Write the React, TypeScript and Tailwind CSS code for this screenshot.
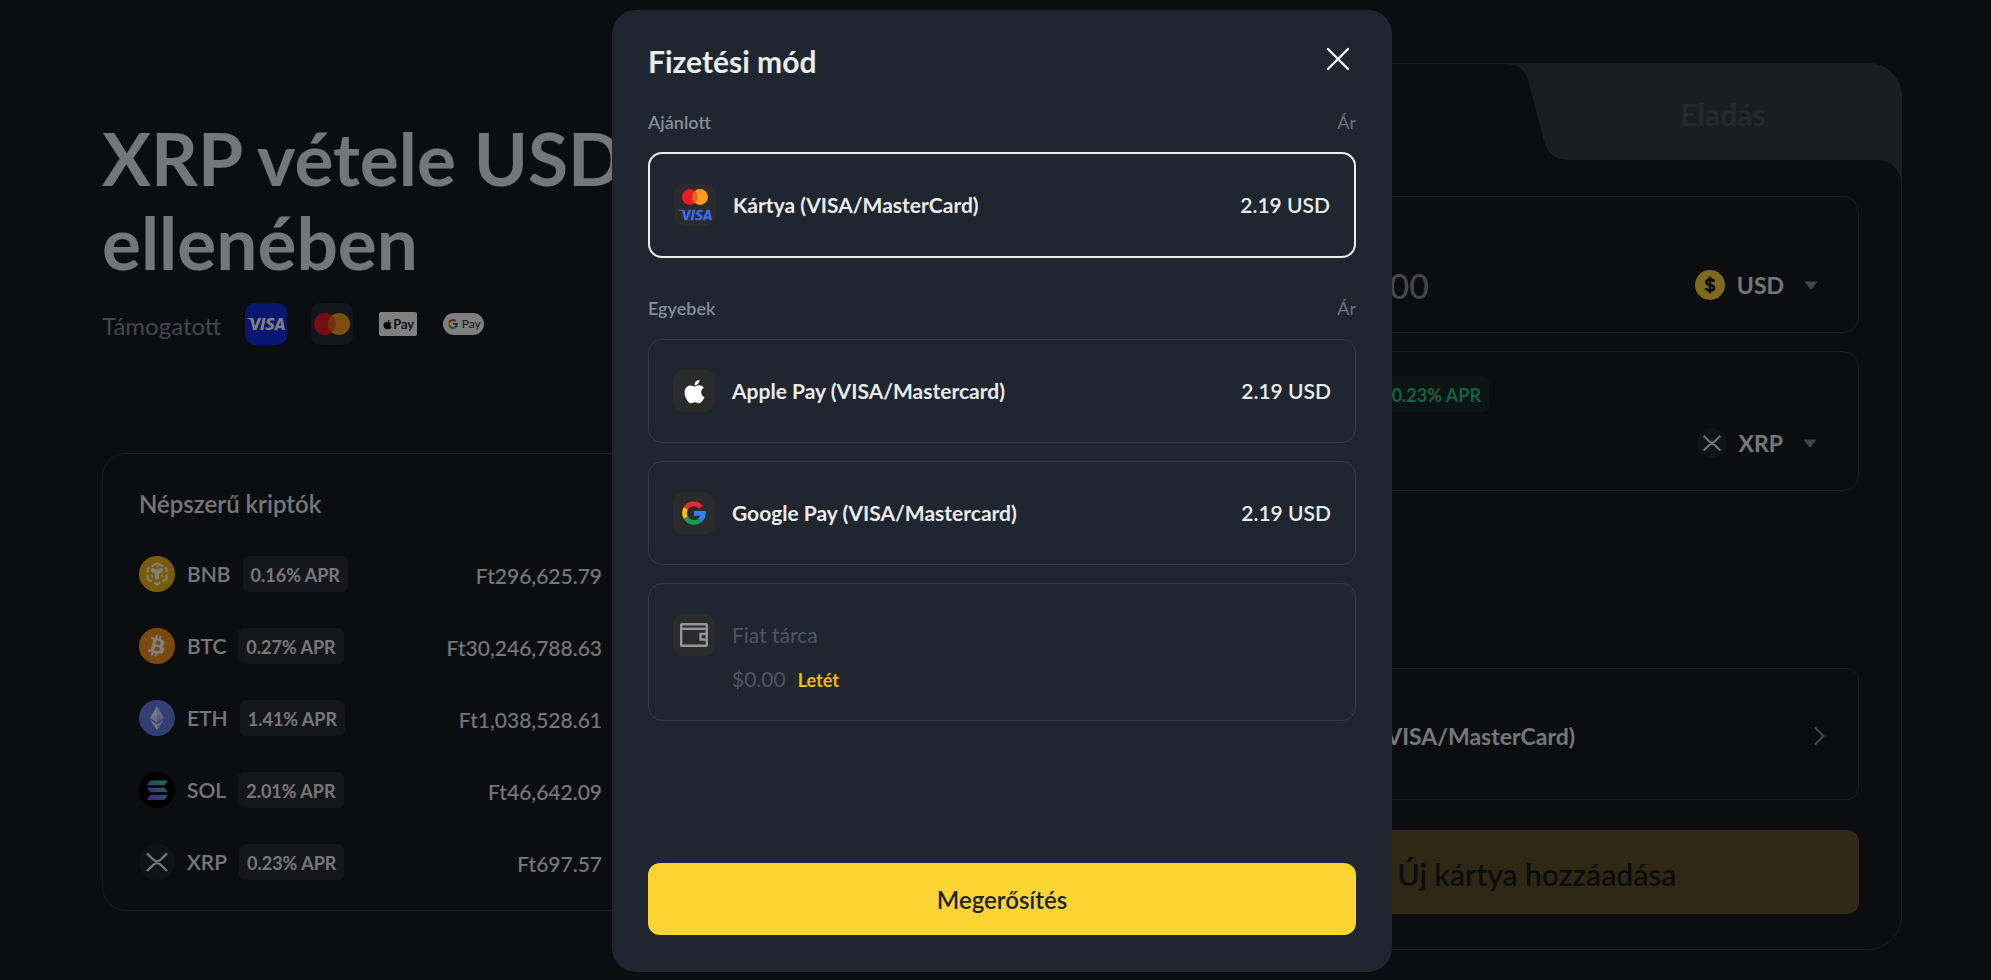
import type { ReactNode } from "react";
import { FaApple, FaBitcoin } from "react-icons/fa";
import { FcGoogle } from "react-icons/fc";
import { SiVisa } from "react-icons/si";

function MastercardMark({ className }: { className: string }) {
  return (
    <svg viewBox="0 0 36 22" className={className} aria-hidden="true">
      <circle cx="11" cy="11" r="11" fill="#eb1c26" />
      <circle cx="25" cy="11" r="11" fill="#f79e1b" />
      <path d="M18 2.5a11 11 0 0 1 0 17a11 11 0 0 1 0-17z" fill="#f16022" />
    </svg>
  );
}

function BnbIcon() {
  return (
    <svg viewBox="0 0 36 36" className="size-9" aria-hidden="true">
      <circle cx="18" cy="18" r="18" fill="#f0b90b" />
      <g fill="none" stroke="#fff" strokeWidth="2.2">
        <path d="M12.6 10.4L18 7.2l5.4 3.2" />
        <path d="M8.6 16.2v-3.5l2-1.2M27.4 16.2v-3.5l-2-1.2" />
        <path d="M8.6 18.6v4.6l4 2.4M27.4 18.6v4.6l-4 2.4" />
        <path d="M15 26.6l3 1.8l3-1.8" />
      </g>
      <path d="M12 13l2.2-1.2L18 14l3.8-2.2L24 13v2.6l-4 2.4v4.6l-2 1.2l-2-1.2V18l-4-2.4z" fill="#fff" />
      <path d="M12 18.2l2 1.2v2.4l-2-1.2zM24 18.2l-2 1.2v2.4l2-1.2zM16.6 10.6l1.4-.8l1.4.8l-1.4.8z" fill="#fff" />
    </svg>
  );
}

function BtcIcon() {
  return (
    <span className="flex size-9 items-center justify-center rounded-full bg-[radial-gradient(circle,#fff_60%,#f7931a_62%)]">
      <FaBitcoin className="size-9 text-[#f7931a]" aria-hidden="true" />
    </span>
  );
}

function EthIcon() {
  return (
    <svg viewBox="0 0 36 36" className="size-9" aria-hidden="true">
      <circle cx="18" cy="18" r="18" fill="#627eea" />
      <path d="M18 6l-7.1 12.2L18 15z" fill="#fff" fillOpacity=".9" />
      <path d="M18 6l7.1 12.2L18 15z" fill="#fff" fillOpacity=".7" />
      <path d="M18 15l-7.1 3.2L18 22.5z" fill="#fff" fillOpacity=".75" />
      <path d="M18 15l7.1 3.2L18 22.5z" fill="#fff" fillOpacity=".45" />
      <path d="M10.9 19.8L18 30v-5.8z" fill="#fff" fillOpacity=".9" />
      <path d="M25.1 19.8L18 30v-5.8z" fill="#fff" fillOpacity=".65" />
    </svg>
  );
}

function SolIcon() {
  return (
    <svg viewBox="0 0 36 36" className="size-9" aria-hidden="true">
      <defs>
        <linearGradient id="sol" x1="8" y1="28" x2="28" y2="8" gradientUnits="userSpaceOnUse">
          <stop offset="0" stopColor="#9b3dff" />
          <stop offset=".45" stopColor="#6a7fd6" />
          <stop offset="1" stopColor="#19fb9b" />
        </linearGradient>
      </defs>
      <circle cx="18" cy="18" r="18" fill="#000" />
      <path d="M11.4 8.4H29l-3.6 4.8H7.6z" fill="url(#sol)" />
      <path d="M7.6 15.8h17.8l3.6 4.4H11.4z" fill="url(#sol)" />
      <path d="M11.4 22.8H29l-3.6 5.2H7.6z" fill="url(#sol)" />
    </svg>
  );
}

function XrpIcon({ className }: { className: string }) {
  return (
    <svg viewBox="0 0 36 36" className={className} aria-hidden="true">
      <circle cx="18" cy="18" r="18" fill="#23262b" />
      <g fill="none" stroke="#eaecef" strokeWidth="2.4">
        <path d="M8 9.4l6.2 6.1a5.4 5.4 0 0 0 7.6 0L28 9.4" />
        <path d="M8 27l6.2-6.1a5.4 5.4 0 0 1 7.6 0L28 27" />
      </g>
    </svg>
  );
}

function DollarIcon() {
  return (
    <svg viewBox="0 0 30 30" className="size-[30px]" aria-hidden="true">
      <circle cx="15" cy="15" r="15" fill="#fcd535" />
      <g fill="none" stroke="#181a20" strokeWidth="2.8">
        <path d="M19 11.8c-.4-1.5-1.7-2.1-4-2.1c-2.3 0-3.6.8-3.6 2.5c0 3.8 7.6 1.6 7.6 5.5c0 1.8-1.5 2.6-4 2.6c-2.5 0-3.8-.7-4.2-2.3" />
        <path d="M15 6.6v16.8" strokeWidth="2.6" />
      </g>
    </svg>
  );
}

function Caret() {
  return (
    <svg viewBox="0 0 14 9" className="h-[9px] w-[14px]" aria-hidden="true">
      <path d="M1.6.5h10.8q1 0 .4.9L8 7.8q-1 1-2 0L1.2 1.4q-.6-.9.4-.9z" fill="#848a94" />
    </svg>
  );
}

function WalletIcon() {
  return (
    <svg viewBox="0 0 28 24" className="h-6 w-7" fill="none" stroke="#93969c" strokeWidth="2.4" aria-hidden="true">
      <rect x="1.2" y="1.2" width="25.6" height="21.6" rx=".6" />
      <path d="M1 5.8h26" />
      <path d="M27 11h-6.5v5.5H27" />
    </svg>
  );
}

function Tile({ children }: { children: ReactNode }) {
  return (
    <span className="flex size-[42px] shrink-0 flex-col items-center justify-center rounded-[10px] bg-[#2b2b2b]">
      {children}
    </span>
  );
}

const coins = [
  { name: "BNB", apr: "0.16% APR", price: "Ft296,625.79", icon: <BnbIcon /> },
  { name: "BTC", apr: "0.27% APR", price: "Ft30,246,788.63", icon: <BtcIcon /> },
  { name: "ETH", apr: "1.41% APR", price: "Ft1,038,528.61", icon: <EthIcon /> },
  { name: "SOL", apr: "2.01% APR", price: "Ft46,642.09", icon: <SolIcon /> },
  { name: "XRP", apr: "0.23% APR", price: "Ft697.57", icon: <XrpIcon className="size-9" /> },
];

function PopularCoins() {
  return (
    <section className="mt-[108px] rounded-3xl border border-[#34383e] px-9 pt-[34px] pb-3">
      <h2 className="text-2xl leading-8 font-semibold">Népszerű kriptók</h2>
      <table className="mt-[18px] w-[463px]">
        <tbody>
          {coins.map((coin) => (
            <tr key={coin.name} className="h-[72px]">
              <td>
                <div className="flex items-center">
                  {coin.icon}
                  <span className="ml-3 text-[21px] leading-6 font-semibold">{coin.name}</span>
                  <span className="ml-3 rounded-md bg-[#292d37] px-2 pt-0.5 text-lg leading-[34px] font-bold">{coin.apr}</span>
                </div>
              </td>
              <td className="pt-1 text-right text-[21px] font-medium">{coin.price}</td>
            </tr>
          ))}
        </tbody>
      </table>
    </section>
  );
}

function Intro() {
  return (
    <div className="min-w-0 flex-1 pt-[53px]">
      <h1 className="max-w-[700px] text-[73px] leading-[84px] font-bold">XRP vétele USD ellenében</h1>
      <div className="mt-[19px] flex h-[42px] items-center gap-6">
        <span className="pt-1 text-2xl text-[#848e9c]">Támogatott</span>
        <span className="flex size-[42px] items-center justify-center rounded-[10px] bg-[#142ee0]">
          <SiVisa className="size-[38px] text-white" aria-label="Visa" />
        </span>
        <span className="flex size-[42px] items-center justify-center rounded-[10px] bg-[#292d37]">
          <MastercardMark className="h-[22px] w-9" />
        </span>
        <span className="flex w-[42px] justify-center">
          <span className="flex h-6 w-[38px] items-center justify-center rounded-xs bg-white text-black">
            <FaApple className="size-[11px]" aria-hidden="true" />
            <span className="text-[13px] leading-4 font-semibold">Pay</span>
          </span>
        </span>
        <span className="flex h-[22px] w-[41px] items-center justify-center gap-[3px] rounded-full bg-white text-[#3c4043]">
          <FcGoogle className="size-3" aria-hidden="true" />
          <span className="text-xs leading-3 font-medium">Pay</span>
        </span>
      </div>
      <PopularCoins />
    </div>
  );
}

function CurrencyButton({ icon, name }: { icon: ReactNode; name: string }) {
  return (
    <button type="button" className="flex items-center text-[23px] leading-[30px] font-bold">
      {icon}
      <span className="mr-5 ml-3">{name}</span>
      <Caret />
    </button>
  );
}

function TradeCard() {
  return (
    <section className="w-[730px] shrink-0 rounded-[34px] border border-[#34383e] pb-[35px]">
      <div className="flex h-24">
        <div className="flex-1" />
        <button type="button" className="relative flex flex-1 items-center justify-center text-[30px] font-bold text-[#4c505e]">
          <svg viewBox="0 0 397 120" className="absolute -top-px -right-px h-[120px] w-[397px]" aria-hidden="true">
            <path
              d="M0 0H363A34 34 0 0 1 397 34V120H396C395 105 386 97 371 97H64C51 97 42 90 39 78L24 20C21 7 13 1 0 1z"
              fill="#363a49"
            />
          </svg>
          <span className="relative pt-1 pl-2">Eladás</span>
        </button>
      </div>
      <div className="px-[42px] pt-9">
        <div className="flex h-[137px] items-end justify-between rounded-2xl border border-[#34383e] pr-10 pb-8">
          <input
            aria-label="Összeg"
            defaultValue="0.00"
            className="h-8 w-[213px] bg-transparent pt-0.5 text-right text-[34px] leading-8 font-medium text-[#848e9c] outline-none"
          />
          <CurrencyButton icon={<DollarIcon />} name="USD" />
        </div>
        <div className="mt-[18px] flex h-[140px] flex-col justify-between rounded-2xl border border-[#34383e] pt-6 pr-[41px] pb-8">
          <div className="flex w-[273px] justify-end">
            <span className="rounded-md bg-[#182a26] px-2 pt-0.5 text-lg leading-[34px] font-bold text-[#2ebd85]">0.23% APR</span>
          </div>
          <div className="flex justify-end">
            <CurrencyButton icon={<XrpIcon className="size-[30px]" />} name="XRP" />
          </div>
        </div>
        <button
          type="button"
          className="mt-[177px] flex h-[132px] w-full items-center rounded-xl border border-[#34383e] pr-8 pl-6 text-[23px] font-bold"
        >
          <Tile>
            <MastercardMark className="h-4 w-[26px]" />
          </Tile>
          <span className="ml-6 flex-1 pt-1 text-left">Kártya (VISA/MasterCard)</span>
          <svg viewBox="0 0 12 20" className="mt-1 mr-px h-5 w-3" fill="none" stroke="#848e9c" strokeWidth="2" aria-hidden="true">
            <path d="M2 1.5l8.500 8.500L2 18.500" />
          </svg>
        </button>
        <button
          type="button"
          className="mt-[30px] h-[84px] w-full rounded-xl bg-[#5c5028] pt-1 text-[30px] font-semibold text-[#181a20]"
        >
          Új kártya hozzáadása
        </button>
      </div>
    </section>
  );
}

function SectionLabel({ children }: { children: ReactNode }) {
  return (
    <div className="flex justify-between text-lg leading-6">
      <h3 className="font-semibold text-[#848e9c]">{children}</h3>
      <span className="text-[#6a7280]">Ár</span>
    </div>
  );
}

function Option({ icon, name, checked }: { icon: ReactNode; name: string; checked?: boolean }) {
  return (
    <label className="flex cursor-pointer items-center rounded-[14px] border border-[#333b47] px-6 py-[30px] text-[21px] leading-6 has-checked:border-2 has-checked:border-[#eaecef]">
      <input type="radio" name="method" defaultChecked={checked} className="sr-only" />
      {icon}
      <span className="ml-[17px] flex-1 font-bold">{name}</span>
      <span className="font-semibold">2.19 USD</span>
    </label>
  );
}

function PaymentDialog() {
  return (
    <div className="fixed inset-0 flex justify-center bg-black/50 pt-2.5 pb-2 pl-[13px]">
      <div
        role="dialog"
        aria-labelledby="dialog-title"
        className="flex w-[780px] flex-col rounded-3xl bg-[#1f262f] px-9 pt-[30px] pb-[37px]"
      >
        <header className="flex h-[42px] items-start justify-between">
          <h2 id="dialog-title" className="pt-px text-[30px] leading-10 font-bold">Fizetési mód</h2>
          <button type="button" aria-label="Bezárás" className="flex size-9 items-center justify-center pt-0.5">
            <svg viewBox="0 0 24 24" className="size-6" stroke="#f5f6f7" strokeWidth="2.4" strokeLinecap="round" aria-hidden="true">
              <path d="M2 2l20 20M22 2L2 22" />
            </svg>
          </button>
        </header>
        <div className="mt-7">
          <SectionLabel>Ajánlott</SectionLabel>
        </div>
        <div className="mt-[18px]">
          <Option
            checked
            name="Kártya (VISA/MasterCard)"
            icon={
              <Tile>
                <MastercardMark className="h-4 w-[26px]" />
                <SiVisa className="mt-1 h-3 w-[33px] text-[#3c6be8]" viewBox="0 8 24 8" aria-hidden="true" />
              </Tile>
            }
          />
        </div>
        <div className="mt-[38px]">
          <SectionLabel>Egyebek</SectionLabel>
        </div>
        <div className="mt-[19px] flex flex-1 flex-col gap-[18px]">
          <Option
            name="Apple Pay (VISA/Mastercard)"
            icon={
              <Tile>
                <FaApple className="size-[27px] text-white" aria-hidden="true" />
              </Tile>
            }
          />
          <Option
            name="Google Pay (VISA/Mastercard)"
            icon={
              <Tile>
                <svg viewBox="0 0 24 24" className="size-6" fill="none" strokeWidth="4.8" aria-hidden="true">
                  <path d="M18.9 6.2A9.400 9.400 0 0 0 3.860 7.300" stroke="#ea2b2e" />
                  <path d="M3.860 7.300a9.400 9.400 0 0 0 0 9.400" stroke="#fbbc05" />
                  <path d="M3.860 16.700a9.400 9.400 0 0 0 13.500 3" stroke="#0fa04a" />
                  <path d="M17.360 19.700a9.400 9.400 0 0 0 4-7.400H12" stroke="#2f7ff0" />
                </svg>
              </Tile>
            }
          />
          <div className="flex items-start rounded-[14px] border border-[#333b47] px-6 pt-[30px] pb-7 text-[21px] leading-6 text-[#4f5663]">
            <Tile>
              <WalletIcon />
            </Tile>
            <div className="ml-[17px]">
              <p className="leading-[42px]">Fiat tárca</p>
              <p className="mt-[11px] flex items-baseline gap-3">
                $0.00
                <a href="#deposit" className="text-lg leading-6 font-bold text-[#f0b90b]">Letét</a>
              </p>
            </div>
          </div>
        </div>
        <button type="button" className="h-[72px] rounded-xl bg-[#fcd535] pt-0.5 text-2xl font-semibold text-[#202630]">
          Megerősítés
        </button>
      </div>
    </div>
  );
}

export default function App() {
  return (
    <div className="min-h-screen bg-[#181a20] pl-[13px] font-['Lato',sans-serif] text-[#eaecef]">
      <main className="flex gap-24 px-[89px] pt-[63px]">
        <Intro />
        <TradeCard />
      </main>
      <PaymentDialog />
    </div>
  );
}
